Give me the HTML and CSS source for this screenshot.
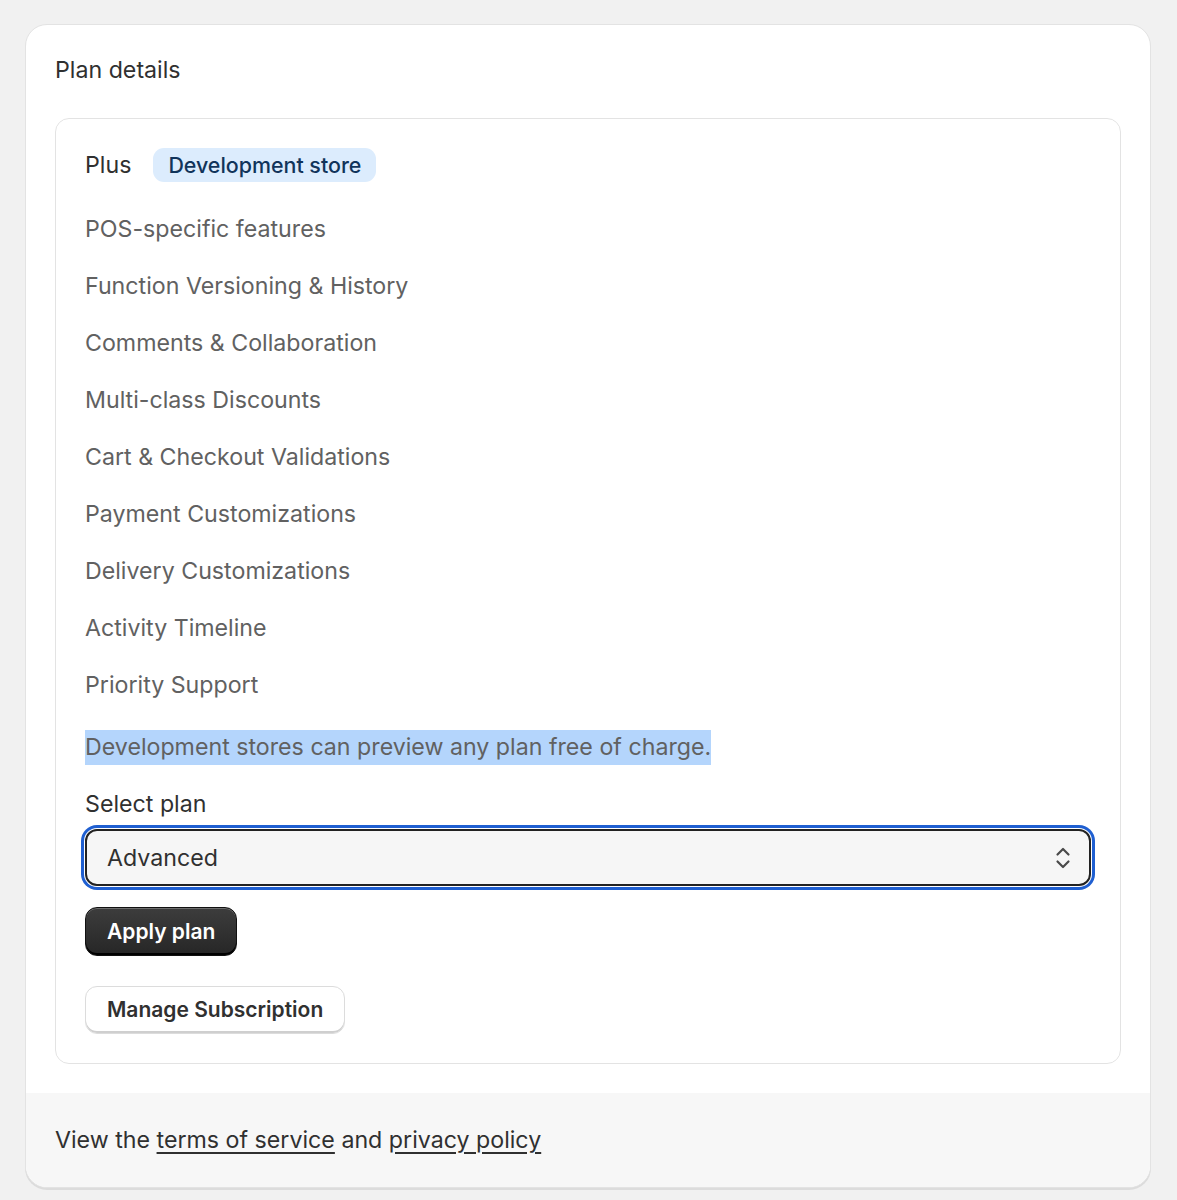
FILE: index.html
```html
<!DOCTYPE html>
<html lang="en">
<head>
  <meta charset="UTF-8">
  <title>Plan details</title>
  <link rel="stylesheet" href="styles.css">
</head>
<body>
  <div class="card">
    <div class="card-body">
      <h2 class="card-title">Plan details</h2>
      <div class="plan-box">
        <div class="plan-head">
          <span class="plan-name">Plus</span>
          <span class="badge">Development store</span>
        </div>
        <ul class="features">
          <li>POS-specific features</li>
          <li>Function Versioning &amp; History</li>
          <li>Comments &amp; Collaboration</li>
          <li>Multi-class Discounts</li>
          <li>Cart &amp; Checkout Validations</li>
          <li>Payment Customizations</li>
          <li>Delivery Customizations</li>
          <li>Activity Timeline</li>
          <li>Priority Support</li>
        </ul>
        <p class="note"><span class="selected">Development stores can preview any plan free of charge.</span></p>
        <label class="field-label">Select plan</label>
        <div class="select">
          <span>Advanced</span>
          <svg class="chevron" width="16" height="26" viewBox="0 0 16 26" fill="none" stroke="#4a4a4a" stroke-width="2.2" stroke-linecap="round" stroke-linejoin="round">
            <path d="M2.5 9.5 L8 4 L13.5 9.5"/>
            <path d="M2.5 16.5 L8 22 L13.5 16.5"/>
          </svg>
        </div>
        <div class="actions">
          <button type="button" class="btn btn-primary">Apply plan</button>
          <button type="button" class="btn btn-secondary">Manage Subscription</button>
        </div>
      </div>
    </div>
    <div class="card-footer">
      View the <a href="#">terms of service</a> and <a href="#">privacy policy</a>
    </div>
  </div>
</body>
</html>
```

FILE: styles.css
```css
* {
  box-sizing: border-box;
}

body {
  margin: 0;
  padding: 24px 26px 12px 25px;
  background-color: #f1f1f1;
  font-family: Inter, "Noto Sans", sans-serif;
  color: #303030;
  font-size: 23.2px;
}

.card {
  background-color: #fff;
  border: 1px solid #e3e3e3;
  border-radius: 22px;
  box-shadow: 0 2px 0 #dcdcdc;
  overflow: hidden;
}

.card-body {
  padding: 29px 29px 29px 29px;
}

.card-title {
  margin: 0 0 32px 0;
  font-size: 23.2px;
  font-weight: 400;
  line-height: 32px;
  color: #303030;
}

.plan-box {
  border: 1px solid #e3e3e3;
  border-radius: 14px;
  padding: 29px 29px 29px 29px;
}

.plan-head {
  display: flex;
  align-items: center;
  gap: 22px;
  height: 34px;
}

.plan-name {
  font-weight: 400;
}

.badge {
  background-color: #dcecfd;
  color: #11345a;
  font-size: 21.4px;
  font-weight: 500;
  padding: 0 15px;
  height: 34px;
  line-height: 34px;
  border-radius: 11px;
}

.features {
  list-style: none;
  margin: 31px 0 0 0;
  padding: 0;
}

.features li {
  color: #616161;
  line-height: 32px;
  margin-bottom: 25px;
}

.features li:last-child {
  margin-bottom: 0;
}

.note {
  margin: 29px 0 0 0;
  color: #616161;
  line-height: 35px;
}

.selected {
  background-color: #b4d5fc;
  display: inline-block;
}

.field-label {
  display: block;
  margin-top: 23px;
  line-height: 32px;
}

.select {
  margin-top: 9px;
  height: 57px;
  display: flex;
  align-items: center;
  justify-content: space-between;
  padding: 0 18px 0 20px;
  background-color: #f6f6f6;
  border: 2px solid #222;
  border-radius: 12px;
  box-shadow: 0 0 0 1px #fff, 0 0 0 4px #1f5fd1;
}

.actions {
  display: flex;
  flex-direction: column;
  align-items: flex-start;
  gap: 30px;
  margin-top: 21px;
}

.btn {
  font-family: Inter, "Noto Sans", sans-serif;
  font-size: 21px;
  font-weight: 600;
  border-radius: 12px;
  cursor: pointer;
  line-height: 28px;
}

.btn-primary {
  height: 49px;
  padding: 0 21px;
  color: #fff;
  background: linear-gradient(#3d3d3d, #262626);
  border: 1px solid #111;
  box-shadow: inset 0 1px 0 rgba(255, 255, 255, 0.25), inset 0 -2px 0 #000;
}

.btn-secondary {
  height: 48px;
  padding: 0 21px 0 21px;
  color: #303030;
  background-color: #fff;
  border: 1px solid #dcdcdc;
  box-shadow: inset 0 -2px 0 #cfcfcf;
}

.card-footer {
  background-color: #f7f7f7;
  padding: 31px 29px 31px 29px;
  line-height: 32px;
  color: #303030;
}

.card-footer a {
  color: #303030;
  text-decoration: underline;
  text-underline-offset: 4px;
}
```
